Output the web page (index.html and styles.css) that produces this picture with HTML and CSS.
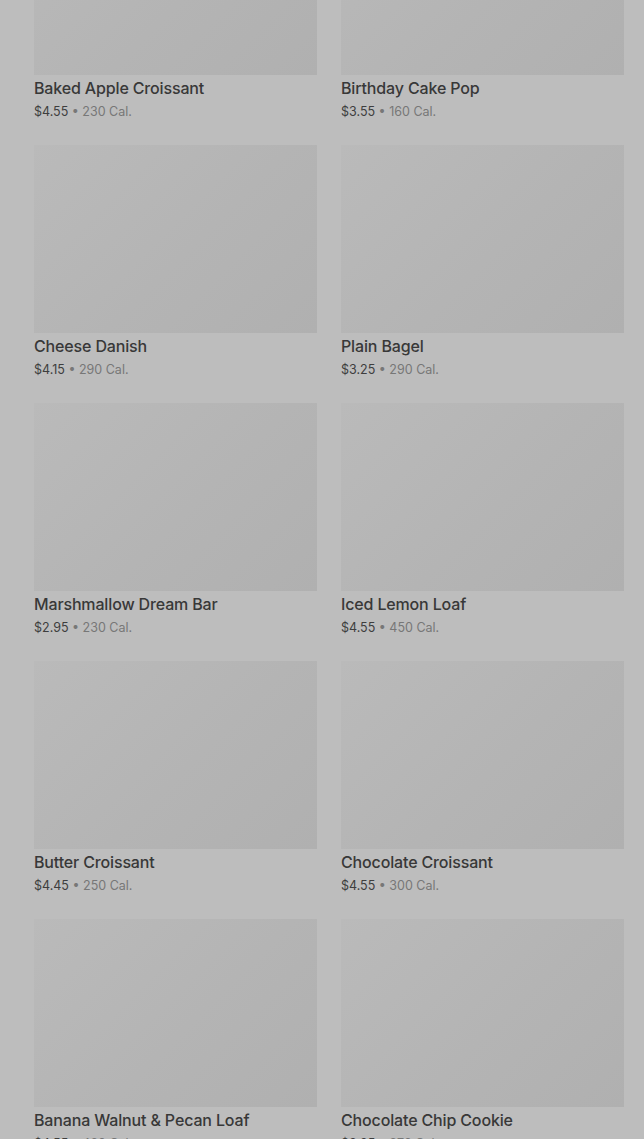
FILE: index.html
```html
<!DOCTYPE html>
<html>
<head>
<link rel="stylesheet" href="styles.css">
</head>
<body>
<div class="menu">
  <div class="item">
    <div class="thumb"></div>
    <h3>Baked Apple Croissant</h3>
    <p class="meta"><span class="price">$4.55</span> &bull; 230 Cal.</p>
  </div>
  <div class="item">
    <div class="thumb"></div>
    <h3>Birthday Cake Pop</h3>
    <p class="meta"><span class="price">$3.55</span> &bull; 160 Cal.</p>
  </div>
  <div class="item">
    <div class="thumb"></div>
    <h3>Cheese Danish</h3>
    <p class="meta"><span class="price">$4.15</span> &bull; 290 Cal.</p>
  </div>
  <div class="item">
    <div class="thumb"></div>
    <h3>Plain Bagel</h3>
    <p class="meta"><span class="price">$3.25</span> &bull; 290 Cal.</p>
  </div>
  <div class="item">
    <div class="thumb"></div>
    <h3>Marshmallow Dream Bar</h3>
    <p class="meta"><span class="price">$2.95</span> &bull; 230 Cal.</p>
  </div>
  <div class="item">
    <div class="thumb"></div>
    <h3>Iced Lemon Loaf</h3>
    <p class="meta"><span class="price">$4.55</span> &bull; 450 Cal.</p>
  </div>
  <div class="item">
    <div class="thumb"></div>
    <h3>Butter Croissant</h3>
    <p class="meta"><span class="price">$4.45</span> &bull; 250 Cal.</p>
  </div>
  <div class="item">
    <div class="thumb"></div>
    <h3>Chocolate Croissant</h3>
    <p class="meta"><span class="price">$4.55</span> &bull; 300 Cal.</p>
  </div>
  <div class="item">
    <div class="thumb"></div>
    <h3>Banana Walnut &amp; Pecan Loaf</h3>
    <p class="meta"><span class="price">$4.55</span> &bull; 420 Cal.</p>
  </div>
  <div class="item">
    <div class="thumb"></div>
    <h3>Chocolate Chip Cookie</h3>
    <p class="meta"><span class="price">$3.25</span> &bull; 370 Cal.</p>
  </div>
</div>
</body>
</html>
```

FILE: styles.css
```css
/* page sits under a dimming overlay, so everything is greyed out */
body {
    margin: 0;
    background-color: #bdbdbd;
    font-family: Inter, 'Noto Sans', sans-serif;
    color: #3a3a3a;
    overflow: hidden;
}
.menu {
    /* scrolled down part way through the list */
    margin-top: -113px;
    padding-left: 34px;
    display: grid;
    grid-template-columns: 283px 283px;
    column-gap: 24px;
    row-gap: 23px;
}
.thumb {
    height: 188px;
    background: linear-gradient(135deg, #bababa 0%, #b4b4b4 55%, #b0b0b0 100%);
}
.item h3 {
    margin: 2px 0 0 0;
    font-size: 16px;
    font-weight: 500;
    letter-spacing: -0.15px;
    line-height: 22px;
    color: #383838;
}
.meta {
    margin: 3px 0 0 0;
    font-size: 12.5px;
    line-height: 20px;
    color: #777;
}
.meta .price {
    color: #3e3e3e;
}
```
